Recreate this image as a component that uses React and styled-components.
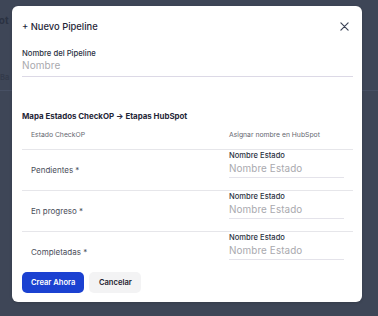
import React from "react";
import styled, { createGlobalStyle } from "styled-components";

const Global = createGlobalStyle`
  html, body { margin: 0; padding: 0; }
  body {
    width: 378px;
    height: 316px;
    overflow: hidden;
    background: #3e4657;
    font-family: Inter, "Noto Sans", sans-serif;
  }
`;

const Page = styled.div`
  position: relative;
  width: 378px;
  height: 316px;
  overflow: hidden;
  background: #3e4657;
`;

const BgContent = styled.div`
  display: flex;
  flex-direction: column;
  padding-top: 14px;
  margin-left: -34px;
`;

const BgTitle = styled.div`
  font-size: 10px;
  font-weight: 700;
  color: #2b3242;
  height: 56px;
`;

const BgTab = styled.div`
  font-size: 7.5px;
  font-weight: 600;
  color: #333a4a;
  padding-left: 34px;
  height: 12px;
  display: flex;
  align-items: flex-end;
`;

const BgLine = styled.div`
  height: 1px;
  background: #475064;
  margin-top: ${(p) => p.$mt}px;
`;

const Overlay = styled.div`
  position: absolute;
  inset: 0;
  display: flex;
  justify-content: flex-start;
  align-items: flex-start;
  padding: 6px 0 0 12px;
`;

const Modal = styled.div`
  width: 350px;
  height: 296px;
  box-sizing: border-box;
  background: #ffffff;
  border-radius: 6px;
  padding: 13px 9px 9px 10px;
  display: flex;
  flex-direction: column;
  box-shadow: 0 1px 3px rgba(0, 0, 0, 0.15);
`;

const Header = styled.div`
  display: flex;
  align-items: center;
  justify-content: space-between;
  height: 16px;
`;

const Title = styled.h2`
  margin: 0;
  font-size: 9.4px;
  font-weight: 500;
  color: #1f2637;
  letter-spacing: 0;
`;

const CloseBtn = styled.button`
  border: none;
  background: none;
  padding: 0;
  width: 14px;
  height: 14px;
  margin-right: 2px;
  display: flex;
  align-items: center;
  justify-content: center;
  color: #3b4356;
  cursor: pointer;
`;

const Field = styled.div`
  display: flex;
  flex-direction: column;
  margin-top: ${(p) => p.$mt || 0}px;
`;

const Label = styled.label`
  font-size: ${(p) => p.$size || 7.6}px;
  font-weight: 500;
  color: #2b3243;
  line-height: 10px;
`;

const Input = styled.input`
  border: none;
  border-bottom: 1px solid ${(p) => p.$line || "#dcd9e6"};
  outline: none;
  padding: 0 0 ${(p) => p.$pb || 0}px;
  font-family: inherit;
  font-size: ${(p) => p.$size || "10px"};
  height: ${(p) => p.$h}px;
  width: ${(p) => p.$w || "100%"};
  box-sizing: border-box;
  color: #333;
  background: transparent;
  letter-spacing: 0.1px;
  &::placeholder {
    color: #a9a9ae;
  }
`;

const SectionTitle = styled.h3`
  margin: 34px 0 0;
  font-size: 7.9px;
  font-weight: 700;
  color: #1f2637;
  line-height: 10px;
`;

const Table = styled.div`
  display: flex;
  flex-direction: column;
  margin-top: 5px;
`;

const HeadRow = styled.div`
  display: grid;
  grid-template-columns: 207px 1fr;
  height: 23px;
  padding-bottom: 6px;
  box-sizing: border-box;
  align-items: center;
  font-size: 6.8px;
  color: #65676f;
`;

const Row = styled.div`
  display: grid;
  grid-template-columns: 207px 1fr;
  border-top: 1px solid #e6e6ea;
  height: 41px;
  box-sizing: border-box;
  align-items: center;
`;

const Cell = styled.div`
  padding-left: ${(p) => p.$pl || 0}px;
`;

const StateName = styled.div`
  padding-left: 9px;
  font-size: 8px;
  color: #4a4e5a;
`;

const InputCell = styled.div`
  display: flex;
  flex-direction: column;
  align-self: start;
  padding: 1px 0 12px;
`;

const Actions = styled.div`
  display: flex;
  gap: 5px;
  margin-top: 0;
`;

const Button = styled.button`
  border: none;
  border-radius: 5px;
  height: 21px;
  padding: 0 ${(p) => (p.$primary ? 9 : 9.5)}px;
  font-family: inherit;
  font-size: 7.6px;
  font-weight: 600;
  background: ${(p) => (p.$primary ? "#1b41d1" : "#f3f3f4")};
  color: ${(p) => (p.$primary ? "#ffffff" : "#1f2330")};
  cursor: pointer;
`;

const states = ["Pendientes *", "En progreso *", "Completadas *"];

export default function App() {
  return (
    <Page>
      <Global />
      <BgContent>
        <BgTitle>HubSpot</BgTitle>
        <BgTab>Ba</BgTab>
        <BgLine $mt={8} />
      </BgContent>
      <Overlay>
        <Modal>
          <Header>
            <Title>+ Nuevo Pipeline</Title>
            <CloseBtn aria-label="Cerrar">
              <svg width="9" height="9" viewBox="0 0 10 10">
                <path d="M1 1 L9 9 M9 1 L1 9" stroke="currentColor" strokeWidth="1.3" strokeLinecap="round" />
              </svg>
            </CloseBtn>
          </Header>
          <Field $mt={16}>
            <Label $size={7.7}>Nombre del Pipeline</Label>
            <Input $h={18} $pb={6} $size="10px" $line="#dcd9e6" placeholder="Nombre" />
          </Field>
          <SectionTitle>Mapa Estados CheckOP → Etapas HubSpot</SectionTitle>
          <Table>
            <HeadRow>
              <Cell $pl={9}>Estado CheckOP</Cell>
              <Cell>Asignar nombre en HubSpot</Cell>
            </HeadRow>
            {states.map((s) => (
              <Row key={s}>
                <StateName>{s}</StateName>
                <InputCell>
                  <Label>Nombre Estado</Label>
                  <Input $h={17} $pb={3} $w="115px" $size="9.9px" $line="#e4e3ea" placeholder="Nombre Estado" />
                </InputCell>
              </Row>
            ))}
          </Table>
          <Actions>
            <Button $primary>Crear Ahora</Button>
            <Button>Cancelar</Button>
          </Actions>
        </Modal>
      </Overlay>
    </Page>
  );
}
